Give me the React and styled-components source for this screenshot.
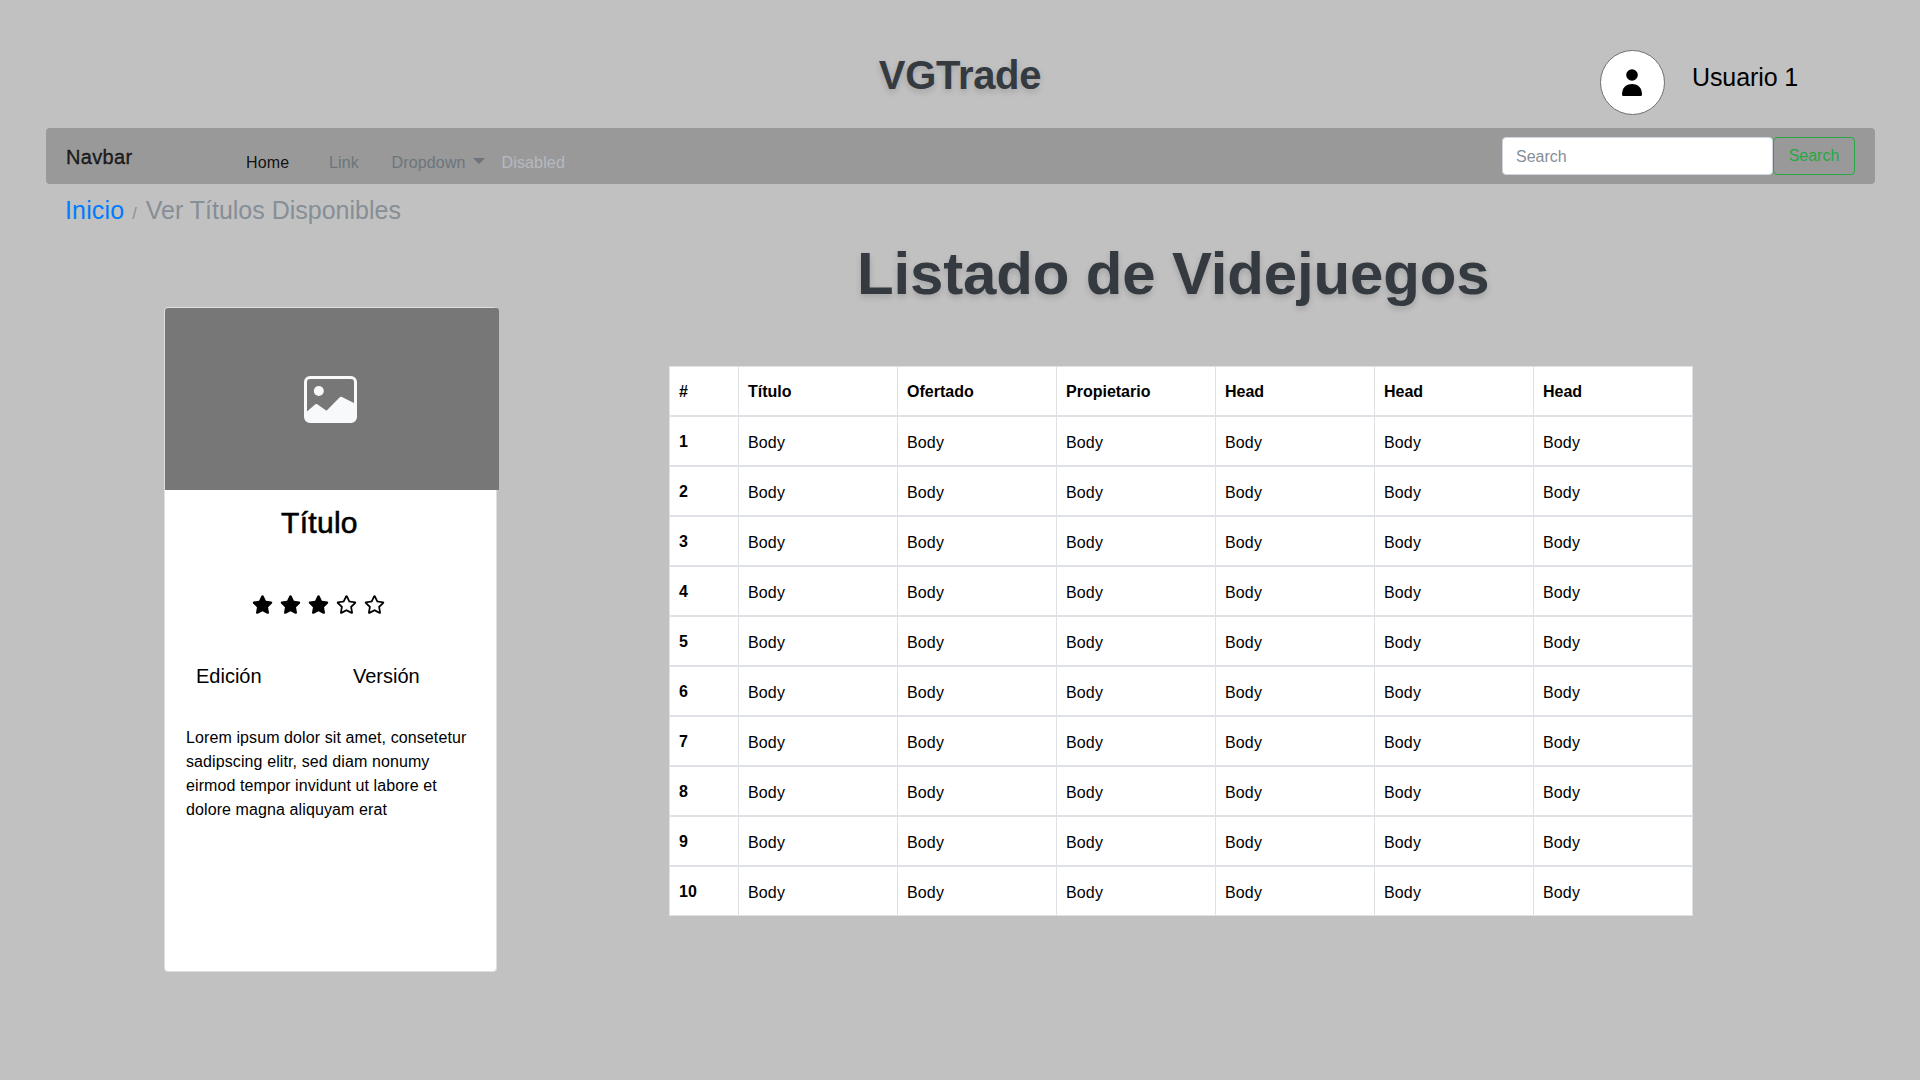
import React from "react";
import styled, { createGlobalStyle } from "styled-components";
import { FaStar, FaRegStar } from "react-icons/fa";

const GlobalStyle = createGlobalStyle`
  *, *::before, *::after { box-sizing: border-box; }
  body {
    margin: 0;
    background: #c1c1c1;
    color: #000;
    font-family: "Helvetica Neue", Helvetica, "Liberation Sans", Arial, sans-serif;
    font-size: 16px;
    line-height: 24px;
  }
`;

const Page = styled.div`
  width: 1920px;
  height: 1080px;
  overflow: hidden;
  background: #c1c1c1;
`;

const Header = styled.header`
  display: grid;
  grid-template-columns: 320px 1280px 320px;
  height: 128px;
  padding-top: 50px;
`;

const SiteTitle = styled.h1`
  grid-column: 2;
  margin: 1px 0 0;
  font-size: 40px;
  line-height: 48px;
  font-weight: 700;
  text-align: center;
  color: #343a40;
  letter-spacing: -0.3px;
  text-shadow: 0 3px 6px rgba(0, 0, 0, 0.16);
`;

const User = styled.div`
  display: flex;
  align-items: flex-start;
  gap: 27px;
`;

const Avatar = styled.div`
  display: flex;
  align-items: center;
  justify-content: center;
  width: 65px;
  height: 65px;
  padding-right: 1px;
  border: 1px solid #707070;
  border-radius: 50%;
  background: #fff;
`;

const UserName = styled.span`
  margin-top: 12px;
  font-size: 25px;
  line-height: 30px;
  letter-spacing: -0.1px;
`;

const Navbar = styled.nav`
  display: flex;
  align-items: flex-start;
  height: 56px;
  margin: 0 45px 0 46px;
  padding: 9px 20px 0 20px;
  border-radius: 4px;
  background: #999;
`;

const NavBrand = styled.span`
  width: 180px;
  margin-top: 8px;
  font-size: 20px;
  letter-spacing: 0.35px;
  color: rgba(0, 0, 0, 0.8);
  -webkit-text-stroke: 0.4px;
`;

const NavLinks = styled.div`
  display: flex;
  flex: 1;
  margin-top: 14px;
  letter-spacing: 0.15px;
`;

const NavLink = styled.a`
  display: flex;
  align-items: center;
  width: ${(p) => p.$width}px;
  color: ${(p) => p.$color};
`;

const Caret = styled.span`
  margin: 0 0 4px 7px;
  border: 6px solid transparent;
  border-top-color: currentColor;
  border-bottom: 0;
`;

const SearchForm = styled.form`
  display: flex;
`;

const SearchInput = styled.input`
  width: 271px;
  height: 38px;
  padding: 1px 13px 0;
  border: 1px solid #ced4da;
  border-radius: 4px;
  background: #fff;
  font: inherit;
  &::placeholder { color: #868e96; opacity: 1; }
`;

const SearchButton = styled.button`
  width: 82px;
  height: 38px;
  padding: 0;
  border: 1px solid #28a745;
  border-radius: 4px;
  background: transparent;
  color: #28a745;
  font: inherit;
`;

const Breadcrumb = styled.div`
  display: flex;
  align-items: baseline;
  height: 48px;
  padding: 11px 0 0 65px;
  font-size: 25px;
  line-height: 30px;
  color: #868e96;
`;

const Crumb = styled.a`
  color: #007bff;
  letter-spacing: 0.15px;
`;

const Slash = styled.span`
  margin: 0 9px 0 8px;
  font-size: 16px;
`;

const Content = styled.main`
  display: flex;
  align-items: flex-start;
  padding-left: 164px;
`;

const Card = styled.article`
  width: 333px;
  height: 665px;
  margin-top: 75px;
  border: 1px solid #dfdfdf;
  border-radius: 4px;
  background: #fff;
`;

const CardImage = styled.div`
  display: flex;
  align-items: center;
  justify-content: center;
  width: 334px;
  height: 182px;
  padding-right: 3px;
  border-radius: 3px 3px 0 0;
  background: #777;
`;

const CardTitle = styled.h2`
  margin: 15px 0 0 116px;
  font-size: 30px;
  line-height: 36px;
  font-weight: 400;
  letter-spacing: 0.3px;
  -webkit-text-stroke: 0.6px;
`;

const Rating = styled.div`
  display: flex;
  gap: 7px;
  margin: 53px 0 0 86.5px;
`;

const CardMeta = styled.div`
  display: grid;
  grid-template-columns: 157px 1fr;
  margin: 49px 0 0 31px;
  font-size: 20px;
`;

const CardText = styled.p`
  width: 292px;
  margin: 38px 0 0 21px;
  letter-spacing: 0.1px;
`;

const Listing = styled.section`
  margin: 6px 0 0 172px;
`;

const ListingTitle = styled(SiteTitle)`
  margin: 0 0 56px 188px;
  font-size: 60px;
  line-height: 72px;
  letter-spacing: -0.15px;
  text-align: left;
`;

const Table = styled.table`
  width: 1024px;
  table-layout: fixed;
  border-collapse: separate;
  border-spacing: 0;
  background: #fff;
`;

const Col = styled.col`
  width: ${(p) => p.$width}px;
`;

const Cell = styled.td`
  height: 50px;
  padding: 3px 0 0 9px;
  border: 1px solid #dee2e6;
  border-right-width: 0;
  vertical-align: middle;
  text-align: left;
  letter-spacing: 0.15px;
  &:last-child { border-right-width: 1px; }
`;

const HeadCell = styled(Cell)`
  padding-top: 2px;
  font-weight: 700;
  letter-spacing: 0;
`;

const columns = ["Título", "Ofertado", "Propietario", "Head", "Head", "Head"];
const rows = Array.from({ length: 10 }, (_, i) => i + 1);

const PersonIcon = () => (
  <svg width="20" height="27" viewBox="0 0 20 27">
    <circle cx="10" cy="6" r="5.800" />
    <path d="M0 25.500C0 19 4 15 10 15s10 4 10 10.500q0 1.500-1.500 1.500h-17Q0 27 0 25.500z" />
  </svg>
);

const ImageIcon = () => (
  <svg width="53" height="47" viewBox="0 0 53 47">
    <path
      fill="#f8f9fa"
      fillRule="evenodd"
      d="M6 0h41a6 6 0 0 1 6 6v35a6 6 0 0 1-6 6H6a6 6 0 0 1-6-6V6a6 6 0 0 1 6-6zM6 3a3 3 0 0 0-3 3v29.500l8.300-7.200q1-.8 2 0L22.500 34.700 35.500 21.500q1.200-1.200 2.500-.5L50 27V6a3 3 0 0 0-3-3z"
    />
    <circle cx="14.800" cy="15" r="5" fill="#f8f9fa" />
  </svg>
);

export default function App() {
  return (
    <Page>
      <GlobalStyle />
      <Header>
        <SiteTitle>VGTrade</SiteTitle>
        <User>
          <Avatar><PersonIcon /></Avatar>
          <UserName>Usuario 1</UserName>
        </User>
      </Header>
      <Navbar>
        <NavBrand>Navbar</NavBrand>
        <NavLinks>
          <NavLink $width={83} $color="rgba(0, 0, 0, 0.9)">Home</NavLink>
          <NavLink $width={62.5} $color="#6c757d">Link</NavLink>
          <NavLink $width={110} $color="#6c757d">Dropdown<Caret /></NavLink>
          <NavLink $width={80} $color="#b5babf">Disabled</NavLink>
        </NavLinks>
        <SearchForm>
          <SearchInput placeholder="Search" />
          <SearchButton type="button">Search</SearchButton>
        </SearchForm>
      </Navbar>
      <Breadcrumb>
        <Crumb>Inicio</Crumb>
        <Slash>/</Slash>
        <span>Ver Títulos Disponibles</span>
      </Breadcrumb>
      <Content>
        <Card>
          <CardImage><ImageIcon /></CardImage>
          <CardTitle>Título</CardTitle>
          <Rating>
            {[1, 2, 3, 4, 5].map((n) =>
              n <= 3 ? <FaStar key={n} size={21} /> : <FaRegStar key={n} size={21} />
            )}
          </Rating>
          <CardMeta>
            <span>Edición</span>
            <span>Versión</span>
          </CardMeta>
          <CardText>
            Lorem ipsum dolor sit amet, consetetur sadipscing elitr, sed diam nonumy
            eirmod tempor invidunt ut labore et dolore magna aliquyam erat
          </CardText>
        </Card>
        <Listing>
          <ListingTitle as="h2">Listado de Videjuegos</ListingTitle>
          <Table>
            <colgroup>
              <Col $width={69} />
              {columns.map((_, i) => (
                <Col key={i} $width={i === columns.length - 1 ? 160 : 159} />
              ))}
            </colgroup>
            <thead>
              <tr>
                <HeadCell as="th">#</HeadCell>
                {columns.map((c, i) => <HeadCell as="th" key={i}>{c}</HeadCell>)}
              </tr>
            </thead>
            <tbody>
              {rows.map((n) => (
                <tr key={n}>
                  <HeadCell as="th">{n}</HeadCell>
                  {columns.map((_, i) => <Cell key={i}>Body</Cell>)}
                </tr>
              ))}
            </tbody>
          </Table>
        </Listing>
      </Content>
    </Page>
  );
}
